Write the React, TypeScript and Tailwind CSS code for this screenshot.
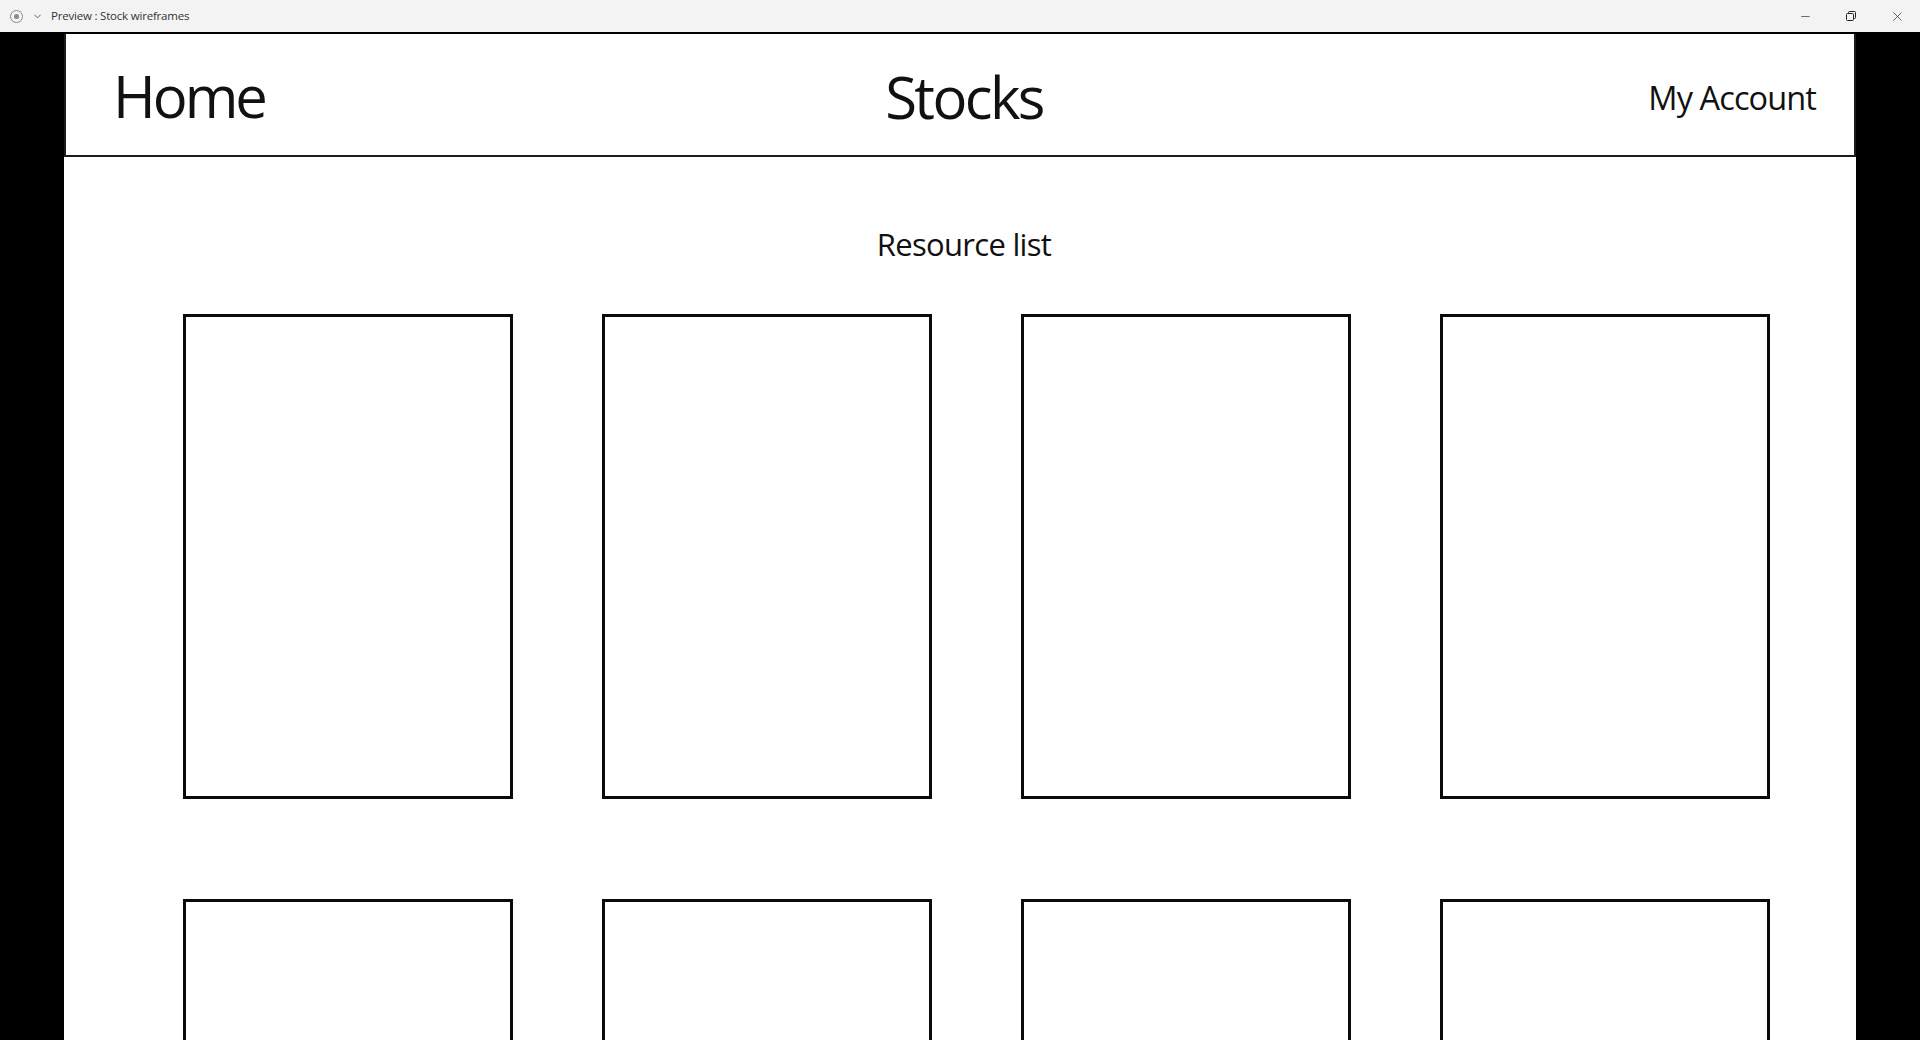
import { X, Minus, ChevronDown } from "lucide-react";

const font = { fontFamily: '"Open Sans", "Noto Sans", sans-serif' };

function TitleBar() {
  return (
    <div className="h-8 shrink-0 bg-[#f3f3f3] flex items-center justify-between">
      <div className="flex items-center">
        <div className="ml-[10px] w-[13px] h-[13px] rounded-full border border-[#8a8a8a] flex items-center justify-center">
          <div className="w-[5px] h-[5px] rounded-full bg-[#8a8a8a]" />
        </div>
        <ChevronDown size={11} strokeWidth={2} className="ml-[9px] text-[#555]" />
        <span className="ml-[8px] text-[11.5px] text-[#333] tracking-[-0.2px]">
          Preview : Stock wireframes
        </span>
      </div>
      <div className="flex items-center h-full">
        <div className="w-[46px] h-full flex items-center justify-center">
          <Minus size={13} strokeWidth={1.2} className="text-[#222]" />
        </div>
        <div className="w-[46px] h-full flex items-center justify-center">
          <svg width="12" height="12" viewBox="0 0 12 12" fill="none" stroke="#222" strokeWidth="1">
            <rect x="1.5" y="3.5" width="7" height="7" rx="1" />
            <path d="M3.5 3.5V2.5a1 1 0 0 1 1-1h5a1 1 0 0 1 1 1v5a1 1 0 0 1-1 1h-1" />
          </svg>
        </div>
        <div className="w-[46px] h-full flex items-center justify-center">
          <X size={15} strokeWidth={1.1} className="text-[#222]" />
        </div>
      </div>
    </div>
  );
}

export default function App() {
  const cards = Array.from({ length: 8 });

  return (
    <div className="h-screen flex flex-col overflow-hidden bg-black" style={font}>
      <TitleBar />

      {/* Preview area */}
      <div className="flex-1 overflow-hidden border-t-2 border-black">
        <div className="mx-[64px] h-full bg-white flex flex-col text-[#111]">
          {/* Header */}
          <header className="h-[123px] shrink-0 border-2 border-t-0 border-[#1c1c1c] grid grid-cols-[1fr_auto_1fr] items-start px-[47px]">
            <span className="mt-[33px] text-[58px] leading-none tracking-[-3px]">Home</span>
            <span className="mt-[34px] ml-[8px] text-[58px] leading-none tracking-[-2.6px]">Stocks</span>
            <span className="mt-[48px] justify-self-end mr-[-9px] text-[32.5px] leading-none tracking-[-0.9px]">
              My Account
            </span>
          </header>

          {/* Content */}
          <div className="flex-1 overflow-hidden">
            <h2 className="text-center text-[31px] leading-none mt-[72px] ml-[8px] tracking-[-0.7px]">Resource list</h2>
            <div className="mt-[54px] pl-[119px] grid grid-cols-[repeat(4,330px)] gap-x-[89px] gap-y-[100px]">
              {cards.map((_, i) => (
                <div key={i} className="h-[485px] border-[3px] border-[#0a0a0a] bg-white" />
              ))}
            </div>
          </div>
        </div>
      </div>
    </div>
  );
}
